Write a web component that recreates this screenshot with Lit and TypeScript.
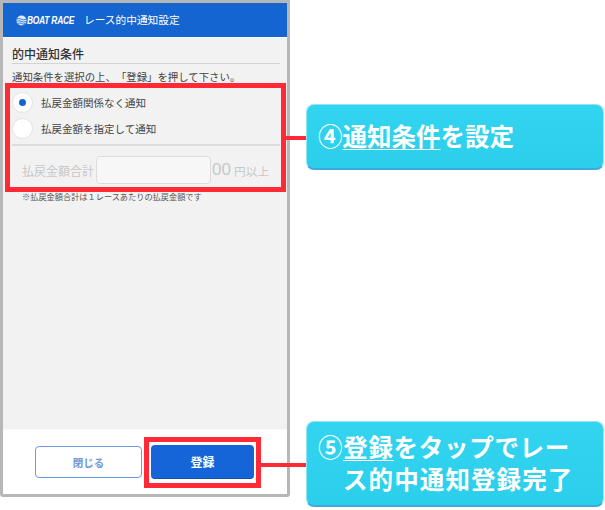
import { LitElement, html, css } from "lit";
import { customElement } from "lit/decorators.js";

@customElement("app-root")
export class AppRoot extends LitElement {
  static styles = css`
    :host {
      display: block;
      position: relative;
      width: 605px;
      height: 510px;
      background: #fff;
      overflow: hidden;
      font-family: "Noto Sans CJK JP", "Liberation Sans", sans-serif;
      text-spacing-trim: space-all;
    }
    .phone {
      box-sizing: border-box;
      width: 290px;
      height: 497px;
      border: 3px solid #b7b7b7;
      border-radius: 0 0 3px 3px;
      display: flex;
      flex-direction: column;
      background: #f2f2f2;
    }
    .header {
      height: 34px;
      flex: none;
      background: #1565d0;
      border-bottom: 1px solid #fff;
      box-sizing: content-box;
      color: #fff;
      display: flex;
      align-items: center;
      padding-left: 13px;
      gap: 0;
    }
    .logo-text {
      font-family: "Liberation Sans", sans-serif;
      font-weight: 700;
      font-style: italic;
      font-size: 10.5px;
      letter-spacing: -0.3px;
      width: 50px;
      white-space: nowrap;
      transform: scaleX(0.8);
      transform-origin: left center;
    }
    .header-title {
      font-size: 10.7px;
      font-weight: 400;
      margin-left: 7px;
      line-height: 1;
      white-space: nowrap;
      width: 100px;
    }
    .main {
      flex: 1;
      padding: 7px 7px 0 9px;
      min-height: 0;
    }
    .section-title {
      font-size: 12px;
      font-weight: 500;
      color: #333;
      line-height: 18px;
      border-bottom: 1px solid #d4d4d4;
    }
    .lead {
      font-size: 10.4px;
      color: #444;
      line-height: 14px;
      margin-top: 6px;
      white-space: nowrap;
    }
    .options {
      margin-top: 5px;
      height: 52px;
    }
    .option {
      display: flex;
      align-items: center;
      height: 26px;
      gap: 8px;
      font-size: 10.5px;
      color: #444;
      white-space: nowrap;
    }
    .radio {
      box-sizing: border-box;
      width: 21px;
      height: 21px;
      border-radius: 50%;
      background: #fff;
      border: 1px solid #e3e3e3;
      display: flex;
      align-items: center;
      justify-content: center;
      flex: none;
    }
    .dot {
      width: 7px;
      height: 7px;
      border-radius: 50%;
      background: #1565d0;
    }
    .sep {
      height: 2px;
      background: #dcdcdc;
      margin-top: 3px;
    }
    .amount {
      display: flex;
      align-items: center;
      height: 28px;
      margin-top: 10px;
      padding-left: 10px;
      color: #c8c8c8;
      white-space: nowrap;
    }
    .amount-label {
      font-size: 12px;
      width: 74px;
      flex: none;
    }
    .input {
      box-sizing: border-box;
      width: 115px;
      height: 28px;
      flex: none;
      background: #f7f7f7;
      border: 1px solid #dcdcdc;
      border-radius: 4px;
    }
    .zeros {
      font-family: "Liberation Sans", sans-serif;
      font-size: 17px;
      margin-left: 1px;
      width: 22px;
      flex: none;
    }
    .unit {
      font-size: 11.7px;
    }
    .note {
      font-size: 8.2px;
      color: #555;
      line-height: 12px;
      margin-top: 6px;
      padding-left: 10px;
      white-space: nowrap;
    }
    .footer {
      height: 65px;
      flex: none;
      background: #fff;
      display: flex;
      align-items: flex-start;
      padding: 15px 0 0 32px;
      gap: 9px;
      border-top: 1px solid #f8f8f8;
      box-sizing: border-box;
    }
    .btn {
      box-sizing: border-box;
      display: flex;
      align-items: center;
      justify-content: center;
      border-radius: 4px;
      font-weight: 700;
    }
    .btn.close {
      width: 107px;
      height: 32px;
      margin-top: 1px;
      background: #fff;
      border: 1px solid #6a9ae2;
      color: #6f97d6;
      font-size: 10.5px;
    }
    .btn.ok {
      width: 103px;
      height: 34px;
      background: #1565d8;
      color: #fff;
      border-bottom: 1px solid #0f50b0;
      font-size: 12px;
    }
    .frame {
      position: absolute;
      box-sizing: border-box;
      border: 5px solid #ff2a36;
    }
    .frame.a {
      left: 5px;
      top: 83px;
      width: 281px;
      height: 109px;
    }
    .frame.b {
      left: 144px;
      top: 437px;
      width: 117px;
      height: 51px;
    }
    .link {
      position: absolute;
      height: 4px;
      background: #ff2a36;
    }
    .link.a {
      left: 285px;
      top: 136px;
      width: 22px;
    }
    .link.b {
      left: 260px;
      top: 463px;
      width: 47px;
    }
    .callout {
      position: absolute;
      left: 306px;
      width: 298px;
      box-sizing: border-box;
      background: linear-gradient(#32d4f0, #2ccfeb);
      border-radius: 8px;
      border: 1px solid #8fe6f6;
      border-bottom: 2px solid #3fa9dc;
      color: #fff;
      font-weight: 700;
      font-size: 24.5px;
      line-height: 32px;
      padding-left: 11px;
      white-space: nowrap;
      display: flex;
      flex-direction: column;
      justify-content: center;
    }
    .callout.a {
      top: 104px;
      height: 66px;
      padding-bottom: 2px;
    }
    .callout.b {
      top: 421px;
      height: 86px;
      padding-bottom: 2px;
      letter-spacing: 0.7px;
    }
    .callout u {
      text-decoration-thickness: 1px;
      text-underline-offset: 3px;
    }
    .indent {
      padding-left: 25px;
      letter-spacing: 1.1px;
    }
  `;

  render() {
    return html`
      <div class="phone">
        <div class="header">
          <svg width="11" height="11" viewBox="0 0 12 12">
            <circle cx="6" cy="6" r="5.5" fill="#dfeafa"></circle>
            <path d="M0.5 4.5 Q3 3 5.5 4.5 T11.5 4.5 M0.5 7 Q3 5.5 5.5 7 T11.5 7 M2 9.3 Q4 8 6 9.3 T10 9.3" fill="none" stroke="#1565d0" stroke-width="0.9"></path>
          </svg>
          <span class="logo-text">BOAT RACE</span>
          <span class="header-title">レース的中通知設定</span>
        </div>
        <div class="main">
          <div class="section-title">的中通知条件</div>
          <div class="lead">通知条件を選択の上、「登録」を押して下さい。</div>
          <div class="options">
            <div class="option"><span class="radio"><span class="dot"></span></span>払戻金額関係なく通知</div>
            <div class="option"><span class="radio"></span>払戻金額を指定して通知</div>
          </div>
          <div class="sep"></div>
          <div class="amount">
            <span class="amount-label">払戻金額合計</span>
            <span class="input"></span>
            <span class="zeros">00</span>
            <span class="unit">円以上</span>
          </div>
          <div class="note">※払戻金額合計は１レースあたりの払戻金額です</div>
        </div>
        <div class="footer">
          <div class="btn close">閉じる</div>
          <div class="btn ok">登録</div>
        </div>
      </div>
      <div class="link a"></div>
      <div class="link b"></div>
      <div class="frame a"></div>
      <div class="frame b"></div>
      <div class="callout a"><div>④<u>通知条件</u>を設定</div></div>
      <div class="callout b">
        <div>⑤<u>登録</u>をタップでレー</div>
        <div class="indent">ス的中通知登録完了</div>
      </div>
    `;
  }
}
